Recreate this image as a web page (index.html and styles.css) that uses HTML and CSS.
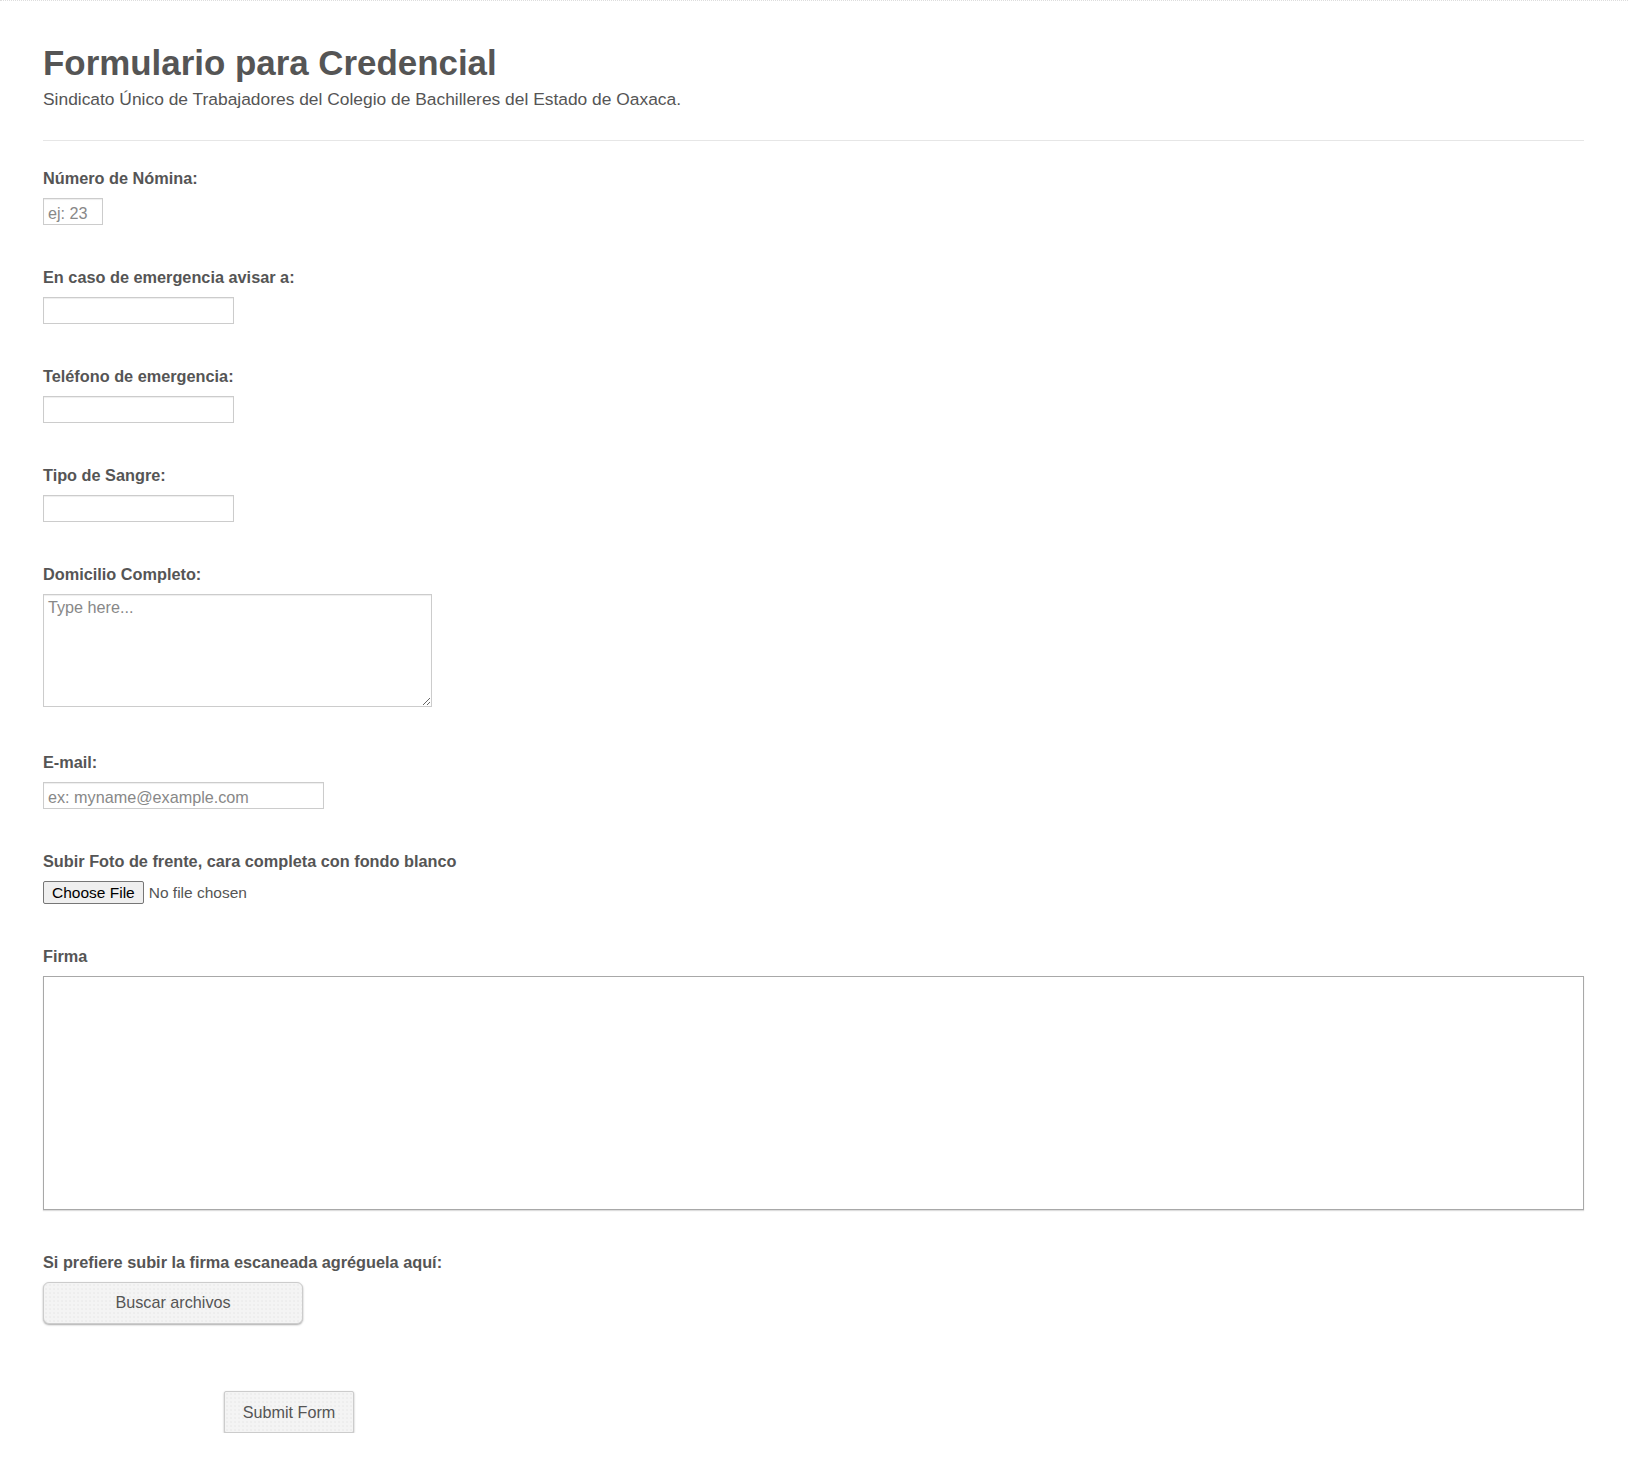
FILE: index.html
```html
<!DOCTYPE html>
<html>
  <head>
    <title>Formulario para Credencial</title>
    <meta charset="UTF-8">
    <meta name="viewport" content="width=device-width, initial-scale=1.0">
    <link rel="stylesheet" href="styles.css">
  </head>
  <body>
    <div class="page">
      <div class="header">
        <h1>Formulario para Credencial</h1>
        <p>Sindicato Único de Trabajadores del Colegio de Bachilleres del Estado de Oaxaca.</p>
      </div>

      <ul class="fields">
        <li class="field">
          <label for="nomina">Número de Nómina:</label>
          <input id="nomina" class="box tiny" placeholder="ej: 23">
        </li>
        <li class="field">
          <label for="contacto">En caso de emergencia avisar a:</label>
          <input id="contacto" class="box mid">
        </li>
        <li class="field">
          <label for="telefono">Teléfono de emergencia:</label>
          <input id="telefono" class="box mid">
        </li>
        <li class="field">
          <label for="sangre">Tipo de Sangre:</label>
          <input id="sangre" class="box mid">
        </li>
        <li class="field tall">
          <label for="domicilio">Domicilio Completo:</label>
          <textarea id="domicilio" class="box area" placeholder="Type here..."></textarea>
        </li>
        <li class="field">
          <label for="email">E-mail:</label>
          <input id="email" class="box wide" placeholder="ex: myname@example.com">
        </li>
        <li class="field">
          <label for="foto">Subir Foto de frente, cara completa con fondo blanco</label>
          <input id="foto" class="file" type="file">
        </li>
        <li class="field">
          <label>Firma</label>
          <div class="signature"></div>
        </li>
        <li class="field">
          <label>Si prefiere subir la firma escaneada agréguela aquí:</label>
          <button class="btn browse">Buscar archivos</button>
        </li>
        <li class="field buttons">
          <button class="btn submit">Submit Form</button>
        </li>
      </ul>
    </div>
  </body>
</html>
```

FILE: styles.css
```css
* {
  box-sizing: border-box;
}
body {
  margin: 0;
  font-family: "Liberation Sans", Arial, Helvetica, sans-serif;
  color: #555;
  background: white;
}
.page {
  border-top: 1px dotted #ddd;
  padding: 0 44px 0 43px;
}

/* header */
.header {
  padding: 42px 0 31px;
  border-bottom: 1px solid #e6e6e6;
}
.header h1 {
  margin: 0;
  font-size: 34.9px;
  line-height: 40px;
  font-weight: bold;
}
.header p {
  margin: 6px 0 0;
  font-size: 17.4px;
  line-height: 20px;
}

/* fields */
.fields {
  list-style: none;
  margin: 0;
  padding: 27px 0 0;
  display: flex;
  flex-direction: column;
  gap: 42px;
}
.field {
  display: flex;
  flex-direction: column;
  align-items: flex-start;
}
.field label {
  font-size: 16.3px;
  line-height: 20px;
  font-weight: bold;
  margin-bottom: 10px;
}
.field.tall {
  padding-bottom: 3px;
}
.box {
  font-family: inherit;
  font-size: 16.2px;
  color: #555;
  height: 27px;
  padding: 3px 4px 0;
  border: 1px solid #ccc;
  box-shadow: inset 0 1px 1px #eee;
  background: white;
  outline: none;
}
.box::placeholder {
  color: #888;
}
.tiny {
  width: 60px;
}
.mid {
  width: 191px;
}
.wide {
  width: 281px;
}
.area {
  width: 389px;
  height: 113px;
  padding: 3px 4px;
  resize: both;
}
.file {
  font-family: inherit;
  font-size: 15.5px;
  color: #555;
  height: 23px;
}
.file::file-selector-button {
  font-family: inherit;
  font-size: 15.5px;
  color: #000;
  height: 23px;
  padding: 0 8px;
  margin-right: 5px;
  background: #efefef;
  border: 1px solid #767676;
  border-radius: 2px;
}
.signature {
  width: 100%;
  height: 234px;
  border: 1px solid #a8a8a8;
  box-shadow: 0 1px 1px #ddd;
}

/* buttons */
.btn {
  font-family: inherit;
  font-size: 16.2px;
  color: #555;
  height: 42px;
  padding: 0;
  border: 1px solid #ccc;
  background-color: #f4f4f4;
  background-image: radial-gradient(#e6e6e6 0.6px, transparent 0.8px);
  background-size: 4px 4px;
  box-shadow: 0 1px 2px #aaa;
  cursor: pointer;
}
.browse {
  width: 260px;
  border-radius: 6px;
  padding-bottom: 2px;
}
.fields .buttons {
  padding-top: 25px;
}
.submit {
  width: 130px;
  margin-left: 181px;
  border-radius: 2px;
}
```
